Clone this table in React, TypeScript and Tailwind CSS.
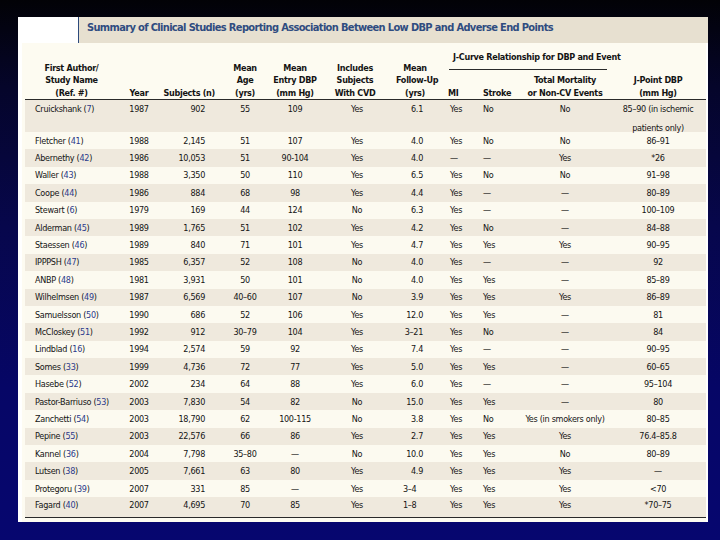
import React from 'react';

// Column grid shared by header and body rows (x from 25 to 706)
const COLS = 'grid grid-cols-[93px_42px_58px_54px_46px_78px_38px_46px_40px_90px_96px]';

type Row = {
  author: string;
  ref: string;
  year: string;
  n: string;
  age: string;
  dbp: string;
  cvd: string;
  fu: string;
  mi: string;
  stroke: string;
  mort: string;
  jp: string;
};

const ROWS: Row[] = [
  { author: 'Fletcher', ref: '41', year: '1988', n: '2,145', age: '51', dbp: '107', cvd: 'Yes', fu: '4.0', mi: 'Yes', stroke: 'No', mort: 'No', jp: '86–91' },
  { author: 'Abernethy', ref: '42', year: '1986', n: '10,053', age: '51', dbp: '90-104', cvd: 'Yes', fu: '4.0', mi: '—', stroke: '—', mort: 'Yes', jp: '*26' },
  { author: 'Waller', ref: '43', year: '1988', n: '3,350', age: '50', dbp: '110', cvd: 'Yes', fu: '6.5', mi: 'Yes', stroke: 'No', mort: 'No', jp: '91–98' },
  { author: 'Coope', ref: '44', year: '1986', n: '884', age: '68', dbp: '98', cvd: 'Yes', fu: '4.4', mi: 'Yes', stroke: '—', mort: '—', jp: '80–89' },
  { author: 'Stewart', ref: '6', year: '1979', n: '169', age: '44', dbp: '124', cvd: 'No', fu: '6.3', mi: 'Yes', stroke: '—', mort: '—', jp: '100–109' },
  { author: 'Alderman', ref: '45', year: '1989', n: '1,765', age: '51', dbp: '102', cvd: 'Yes', fu: '4.2', mi: 'Yes', stroke: 'No', mort: '—', jp: '84–88' },
  { author: 'Staessen', ref: '46', year: '1989', n: '840', age: '71', dbp: '101', cvd: 'Yes', fu: '4.7', mi: 'Yes', stroke: 'Yes', mort: 'Yes', jp: '90–95' },
  { author: 'IPPPSH', ref: '47', year: '1985', n: '6,357', age: '52', dbp: '108', cvd: 'No', fu: '4.0', mi: 'Yes', stroke: '—', mort: '—', jp: '92' },
  { author: 'ANBP', ref: '48', year: '1981', n: '3,931', age: '50', dbp: '101', cvd: 'No', fu: '4.0', mi: 'Yes', stroke: 'Yes', mort: '—', jp: '85–89' },
  { author: 'Wilhelmsen', ref: '49', year: '1987', n: '6,569', age: '40–60', dbp: '107', cvd: 'No', fu: '3.9', mi: 'Yes', stroke: 'Yes', mort: 'Yes', jp: '86–89' },
  { author: 'Samuelsson', ref: '50', year: '1990', n: '686', age: '52', dbp: '106', cvd: 'Yes', fu: '12.0', mi: 'Yes', stroke: 'Yes', mort: '—', jp: '81' },
  { author: 'McCloskey', ref: '51', year: '1992', n: '912', age: '30–79', dbp: '104', cvd: 'Yes', fu: '3–21', mi: 'Yes', stroke: 'No', mort: '—', jp: '84' },
  { author: 'Lindblad', ref: '16', year: '1994', n: '2,574', age: '59', dbp: '92', cvd: 'Yes', fu: '7.4', mi: 'Yes', stroke: '—', mort: '—', jp: '90–95' },
  { author: 'Somes', ref: '33', year: '1999', n: '4,736', age: '72', dbp: '77', cvd: 'Yes', fu: '5.0', mi: 'Yes', stroke: 'Yes', mort: '—', jp: '60–65' },
  { author: 'Hasebe', ref: '52', year: '2002', n: '234', age: '64', dbp: '88', cvd: 'Yes', fu: '6.0', mi: 'Yes', stroke: '—', mort: '—', jp: '95–104' },
  { author: 'Pastor-Barriuso', ref: '53', year: '2003', n: '7,830', age: '54', dbp: '82', cvd: 'No', fu: '15.0', mi: 'Yes', stroke: 'Yes', mort: '—', jp: '80' },
  { author: 'Zanchetti', ref: '54', year: '2003', n: '18,790', age: '62', dbp: '100-115', cvd: 'No', fu: '3.8', mi: 'Yes', stroke: 'No', mort: 'Yes (in smokers only)', jp: '80–85' },
  { author: 'Pepine', ref: '55', year: '2003', n: '22,576', age: '66', dbp: '86', cvd: 'Yes', fu: '2.7', mi: 'Yes', stroke: 'Yes', mort: 'Yes', jp: '76.4–85.8' },
  { author: 'Kannel', ref: '36', year: '2004', n: '7,798', age: '35–80', dbp: '—', cvd: 'No', fu: '10.0', mi: 'Yes', stroke: 'Yes', mort: 'No', jp: '80–89' },
  { author: 'Lutsen', ref: '38', year: '2005', n: '7,661', age: '63', dbp: '80', cvd: 'Yes', fu: '4.9', mi: 'Yes', stroke: 'Yes', mort: 'Yes', jp: '—' },
  { author: 'Protegoru', ref: '39', year: '2007', n: '331', age: '85', dbp: '—', cvd: 'Yes', fu: '3–4', mi: 'Yes', stroke: 'Yes', mort: 'Yes', jp: '<70' },
  { author: 'Fagard', ref: '40', year: '2007', n: '4,695', age: '70', dbp: '85', cvd: 'Yes', fu: '1–8', mi: 'Yes', stroke: 'Yes', mort: 'Yes', jp: '*70–75' },
];

const Author = ({ name, refNo }: { name: string; refNo: string }) => (
  <span>
    {name} (<span className="text-[#2b3a8c]">{refNo}</span>)
  </span>
);

function Cells({ r }: { r: Row }) {
  // short ranges in the follow-up column sit flush left, decimals flush right
  const fuLeft = r.fu === '3–4' || r.fu === '1–8';
  return (
    <>
      <div className="pl-[10px] whitespace-nowrap">
        <Author name={r.author} refNo={r.ref} />
      </div>
      <div className="text-center">{r.year}</div>
      <div className="text-right pr-[13px]">{r.n}</div>
      <div className="text-center">{r.age}</div>
      <div className="text-center">{r.dbp}</div>
      <div className="text-center">{r.cvd}</div>
      <div className={fuLeft ? 'pl-[7px]' : 'text-right pr-[11px]'}>{r.fu}</div>
      <div className="pl-[16px]">{r.mi}</div>
      <div className="pl-[3px]">{r.stroke}</div>
      <div className="text-center whitespace-nowrap">{r.mort}</div>
      <div className="text-center whitespace-nowrap">{r.jp}</div>
    </>
  );
}

export default function App(): React.JSX.Element {
  return (
    <div
      className="w-[720px] h-[540px] overflow-hidden pt-[17px] pl-[18px] bg-[linear-gradient(to_bottom,#020206_0%,#05052a_16%,#07074c_42%,#060666_72%,#06066f_100%)]"
      style={{ fontFamily: '"DejaVu Sans Condensed", "Liberation Sans", sans-serif' }}
    >
      <div className="w-[690px] h-[505px] bg-white flex flex-col">
        {/* Title bar */}
        <div className="flex h-[26px]">
          <div className="w-[60px] bg-white" />
          <div className="w-px bg-[#2d4a7c]" />
          <div className="flex-1 bg-[#e7e0d0] pl-[8px] pt-[4px] text-[11px] leading-[14px] font-bold tracking-[-0.65px] text-[#2f4c80] whitespace-nowrap">
            Summary of Clinical Studies Reporting Association Between Low DBP and Adverse End Points
          </div>
        </div>

        {/* Table */}
        <div className="ml-[4px] mr-[2px] flex-1 bg-[#fdfbf1] pl-[3px] text-[9px] tracking-[-0.3px] text-[#141414]">
          {/* Header */}
          <div className={`${COLS} grid-rows-[27px_30px] h-[57px] border-b-[1.5px] border-[#2a2a2a] font-bold leading-[12.5px] items-end whitespace-nowrap`}>
            <div className="row-span-2 text-center pb-[1px]">
              First Author/<br />Study Name<br />(Ref. #)
            </div>
            <div className="row-span-2 text-center pb-[1px]">Year</div>
            <div className="row-span-2 text-right pr-[3px] pb-[1px]">Subjects (n)</div>
            <div className="row-span-2 text-center pb-[1px]">
              Mean<br />Age<br />(yrs)
            </div>
            <div className="row-span-2 text-center pb-[1px]">
              Mean<br />Entry DBP<br />(mm Hg)
            </div>
            <div className="row-span-2 text-center pb-[1px] pr-[4px]">
              Includes<br />Subjects<br />With CVD
            </div>
            <div className="row-span-2 text-center pb-[1px]">
              Mean<br />Follow-Up<br />(yrs)
            </div>
            <div className="col-start-8 col-span-3 row-start-1 self-end ml-[15px] mr-[3px] border-b-[1.5px] border-[#2a2a2a] text-center pb-[6px] pl-[4px]">
              J-Curve Relationship for DBP and Event
            </div>
            <div className="row-span-2 col-start-11 row-start-1 text-center pb-[1px]">
              J-Point DBP<br />(mm Hg)
            </div>
            <div className="col-start-8 row-start-2 pl-[14px] pb-[1px]">MI</div>
            <div className="col-start-9 row-start-2 pl-[3px] pb-[1px]">Stroke</div>
            <div className="col-start-10 row-start-2 text-center pb-[1px]">
              Total Mortality<br />or Non-CV Events
            </div>
          </div>

          {/* First row spans two lines */}
          <div className={`${COLS} h-[32px] bg-[#efe9dd] leading-[19px] items-start`}>
            <div className="pl-[10px] whitespace-nowrap">
              <Author name="Cruickshank" refNo="7" />
            </div>
            <div className="text-center">1987</div>
            <div className="text-right pr-[13px]">902</div>
            <div className="text-center">55</div>
            <div className="text-center">109</div>
            <div className="text-center">Yes</div>
            <div className="text-right pr-[11px]">6.1</div>
            <div className="pl-[16px]">Yes</div>
            <div className="pl-[3px]">No</div>
            <div className="text-center">No</div>
            <div className="text-center whitespace-nowrap">
              85–90 (in ischemic<br />patients only)
            </div>
          </div>

          {ROWS.map((r, i) => (
            <div
              key={r.author}
              className={`${COLS} items-center leading-[12px] ${i % 2 === 0 ? 'bg-[#fcfaf0]' : 'bg-[#efe9dd]'} ${
                i === ROWS.length - 1 ? 'h-[21px] pb-[4px] border-b-[1.5px] border-[#2a2a2a]' : 'h-[17.4px]'
              }`}
            >
              <Cells r={r} />
            </div>
          ))}
        </div>
      </div>
    </div>
  );
}
